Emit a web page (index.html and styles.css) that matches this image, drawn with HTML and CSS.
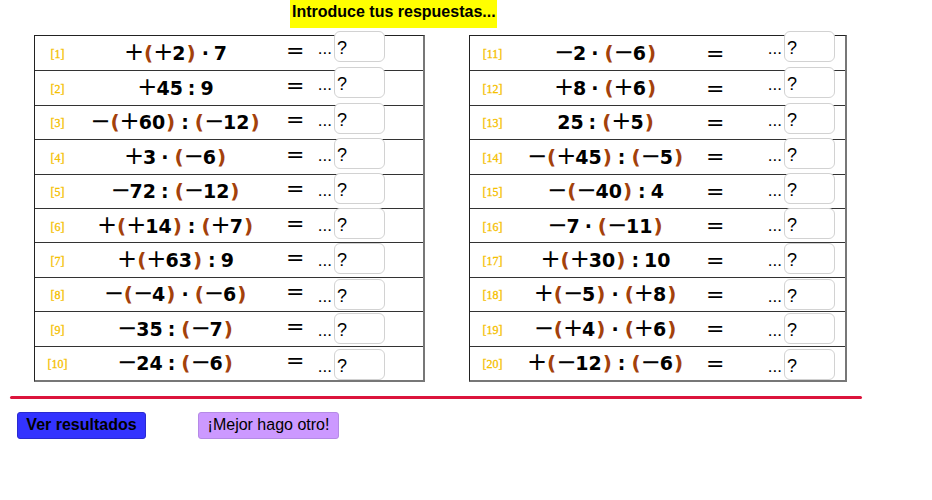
FILE: index.html
```html
<!DOCTYPE html>
<html lang="es">
<head>
<meta charset="utf-8">
<title>Introduce tus respuestas</title>
<link rel="stylesheet" href="styles.css">
</head>
<body>
<div class="header">Introduce tus respuestas...</div>
<div class="tables">
  <div class="table table-left">
    <div class="row"><span class="lbl">[1]</span><span class="expr"><i class="s">+</i><b class="p">(</b><i class="s">+</i>2<b class="p">)</b><i class="op">·</i>7</span><span class="eq">=</span><span class="ans"><span class="dots">...</span><span class="box">?</span></span></div>
    <div class="row"><span class="lbl">[2]</span><span class="expr"><i class="s">+</i>45<i class="op">:</i>9</span><span class="eq">=</span><span class="ans"><span class="dots">...</span><span class="box">?</span></span></div>
    <div class="row"><span class="lbl">[3]</span><span class="expr"><i class="s">−</i><b class="p">(</b><i class="s">+</i>60<b class="p">)</b><i class="op">:</i><b class="p">(</b><i class="s">−</i>12<b class="p">)</b></span><span class="eq">=</span><span class="ans"><span class="dots">...</span><span class="box">?</span></span></div>
    <div class="row"><span class="lbl">[4]</span><span class="expr"><i class="s">+</i>3<i class="op">·</i><b class="p">(</b><i class="s">−</i>6<b class="p">)</b></span><span class="eq">=</span><span class="ans"><span class="dots">...</span><span class="box">?</span></span></div>
    <div class="row"><span class="lbl">[5]</span><span class="expr"><i class="s">−</i>72<i class="op">:</i><b class="p">(</b><i class="s">−</i>12<b class="p">)</b></span><span class="eq">=</span><span class="ans"><span class="dots">...</span><span class="box">?</span></span></div>
    <div class="row"><span class="lbl">[6]</span><span class="expr"><i class="s">+</i><b class="p">(</b><i class="s">+</i>14<b class="p">)</b><i class="op">:</i><b class="p">(</b><i class="s">+</i>7<b class="p">)</b></span><span class="eq">=</span><span class="ans"><span class="dots">...</span><span class="box">?</span></span></div>
    <div class="row"><span class="lbl">[7]</span><span class="expr"><i class="s">+</i><b class="p">(</b><i class="s">+</i>63<b class="p">)</b><i class="op">:</i>9</span><span class="eq">=</span><span class="ans"><span class="dots">...</span><span class="box">?</span></span></div>
    <div class="row"><span class="lbl">[8]</span><span class="expr"><i class="s">−</i><b class="p">(</b><i class="s">−</i>4<b class="p">)</b><i class="op">·</i><b class="p">(</b><i class="s">−</i>6<b class="p">)</b></span><span class="eq">=</span><span class="ans"><span class="dots">...</span><span class="box">?</span></span></div>
    <div class="row"><span class="lbl">[9]</span><span class="expr"><i class="s">−</i>35<i class="op">:</i><b class="p">(</b><i class="s">−</i>7<b class="p">)</b></span><span class="eq">=</span><span class="ans"><span class="dots">...</span><span class="box">?</span></span></div>
    <div class="row"><span class="lbl">[10]</span><span class="expr"><i class="s">−</i>24<i class="op">:</i><b class="p">(</b><i class="s">−</i>6<b class="p">)</b></span><span class="eq">=</span><span class="ans"><span class="dots">...</span><span class="box">?</span></span></div>
  </div>
  <div class="table table-right">
    <div class="row"><span class="lbl">[11]</span><span class="expr"><i class="s">−</i>2<i class="op">·</i><b class="p">(</b><i class="s">−</i>6<b class="p">)</b></span><span class="eq">=</span><span class="ans"><span class="dots">...</span><span class="box">?</span></span></div>
    <div class="row"><span class="lbl">[12]</span><span class="expr"><i class="s">+</i>8<i class="op">·</i><b class="p">(</b><i class="s">+</i>6<b class="p">)</b></span><span class="eq">=</span><span class="ans"><span class="dots">...</span><span class="box">?</span></span></div>
    <div class="row"><span class="lbl">[13]</span><span class="expr">25<i class="op">:</i><b class="p">(</b><i class="s">+</i>5<b class="p">)</b></span><span class="eq">=</span><span class="ans"><span class="dots">...</span><span class="box">?</span></span></div>
    <div class="row"><span class="lbl">[14]</span><span class="expr"><i class="s">−</i><b class="p">(</b><i class="s">+</i>45<b class="p">)</b><i class="op">:</i><b class="p">(</b><i class="s">−</i>5<b class="p">)</b></span><span class="eq">=</span><span class="ans"><span class="dots">...</span><span class="box">?</span></span></div>
    <div class="row"><span class="lbl">[15]</span><span class="expr"><i class="s">−</i><b class="p">(</b><i class="s">−</i>40<b class="p">)</b><i class="op">:</i>4</span><span class="eq">=</span><span class="ans"><span class="dots">...</span><span class="box">?</span></span></div>
    <div class="row"><span class="lbl">[16]</span><span class="expr"><i class="s">−</i>7<i class="op">·</i><b class="p">(</b><i class="s">−</i>11<b class="p">)</b></span><span class="eq">=</span><span class="ans"><span class="dots">...</span><span class="box">?</span></span></div>
    <div class="row"><span class="lbl">[17]</span><span class="expr"><i class="s">+</i><b class="p">(</b><i class="s">+</i>30<b class="p">)</b><i class="op">:</i>10</span><span class="eq">=</span><span class="ans"><span class="dots">...</span><span class="box">?</span></span></div>
    <div class="row"><span class="lbl">[18]</span><span class="expr"><i class="s">+</i><b class="p">(</b><i class="s">−</i>5<b class="p">)</b><i class="op">·</i><b class="p">(</b><i class="s">+</i>8<b class="p">)</b></span><span class="eq">=</span><span class="ans"><span class="dots">...</span><span class="box">?</span></span></div>
    <div class="row"><span class="lbl">[19]</span><span class="expr"><i class="s">−</i><b class="p">(</b><i class="s">+</i>4<b class="p">)</b><i class="op">·</i><b class="p">(</b><i class="s">+</i>6<b class="p">)</b></span><span class="eq">=</span><span class="ans"><span class="dots">...</span><span class="box">?</span></span></div>
    <div class="row"><span class="lbl">[20]</span><span class="expr"><i class="s">+</i><b class="p">(</b><i class="s">−</i>12<b class="p">)</b><i class="op">:</i><b class="p">(</b><i class="s">−</i>6<b class="p">)</b></span><span class="eq">=</span><span class="ans"><span class="dots">...</span><span class="box">?</span></span></div>
  </div>
</div>
<div class="divider"></div>
<div class="buttons">
  <button class="btn btn-primary">Ver resultados</button>
  <button class="btn btn-secondary">¡Mejor hago otro!</button>
</div>
</body>
</html>
```

FILE: styles.css
```css
html, body {
  margin: 0;
  padding: 0;
  background: #ffffff;
}
body {
  font-family: "Liberation Sans", Arial, sans-serif;
  color: #000;
}
.header {
  margin-left: 290px;
  width: 205px;
  height: 28px;
  padding-left: 2px;
  background: #ffff00;
  font-weight: bold;
  font-size: 16px;
  line-height: 24px;
  white-space: nowrap;
}
.tables {
  display: flex;
  gap: 44px;
  margin-top: 7px;
  padding-left: 34px;
}
.table {
  display: flex;
  flex-direction: column;
  border-top: 1px solid #222;
  border-left: 1px solid #222;
  border-right: 2px solid #777;
  border-bottom: 2px solid #777;
}
.table-left { width: 388px; }
.table-right { width: 375px; }
.row {
  height: 34.4px;
  box-sizing: border-box;
  display: grid;
  align-items: center;
  padding-left: 8px;
}
.row + .row { border-top: 1px solid #333; }
.table-left .row { grid-template-columns: 29px 208px 6px 31px 68px; }
.table-right .row { grid-template-columns: 29px 198px 1px 61px 68px; }
.lbl {
  grid-column: 1;
  text-align: center;
  font-family: "Liberation Serif", "Times New Roman", serif;
  font-size: 12px;
  color: #f5c000;
  -webkit-text-stroke: 0.3px #f5c000;
  padding-top: 3px;
}
.expr {
  grid-column: 2;
  text-align: center;
  font-family: "DejaVu Sans", sans-serif;
  font-weight: bold;
  font-size: 19px;
  line-height: 24px;
  white-space: nowrap;
}
.s {
  font-style: normal;
  font-weight: normal;
  font-size: 24px;
  line-height: 20px;
  margin: 0 -1px;
}
.p {
  font-weight: bold;
  color: #a3410b;
  font-size: 20px;
  margin: 0 1px;
}
.op {
  font-style: normal;
  margin: 0 5px;
}
.eq {
  grid-column: 4;
  font-family: "DejaVu Sans", sans-serif;
  font-size: 22px;
}
.table-left .eq { padding-bottom: 5px; }
.ans {
  grid-column: 5;
  align-self: start;
  display: flex;
  align-items: baseline;
}
.dots {
  width: 17px;
  box-sizing: border-box;
  padding-right: 2px;
  text-align: right;
  font-size: 17px;
  white-space: nowrap;
}
.box {
  width: 51px;
  height: 31px;
  box-sizing: border-box;
  border: 1px solid #d2d2d2;
  border-radius: 6px;
  background: #fff;
  padding: 3px 0 0 2px;
  font-size: 18px;
  line-height: 26px;
}
.row:nth-child(1) .ans { margin-top: -5px; }
.row:nth-child(2) .ans { margin-top: -4px; }
.row:nth-child(3) .ans { margin-top: -3px; }
.row:nth-child(4) .ans { margin-top: -2px; }
.row:nth-child(5) .ans { margin-top: -2px; }
.row:nth-child(6) .ans { margin-top: -1px; }
.row:nth-child(7) .ans { margin-top: 0px; }
.row:nth-child(8) .ans { margin-top: 1px; }
.row:nth-child(9) .ans { margin-top: 1px; }
.row:nth-child(10) .ans { margin-top: 2px; }
.divider {
  margin: 14px 0 0 10px;
  width: 852px;
  height: 3px;
  border-radius: 2px;
  background: #dc143c;
}
.buttons {
  display: flex;
  gap: 52px;
  margin: 13px 0 0 17px;
}
.btn {
  height: 27px;
  box-sizing: border-box;
  border-radius: 3px;
  font-family: "Liberation Sans", Arial, sans-serif;
  font-size: 16px;
  color: #000;
  padding: 0;
  margin: 0;
  white-space: nowrap;
}
.btn-primary {
  width: 129px;
  background: #3333ff;
  border: 1px solid #2a2ad0;
  font-weight: bold;
}
.btn-secondary {
  width: 141px;
  background: #cc99ff;
  border: 1px solid #b58ae6;
}
```
